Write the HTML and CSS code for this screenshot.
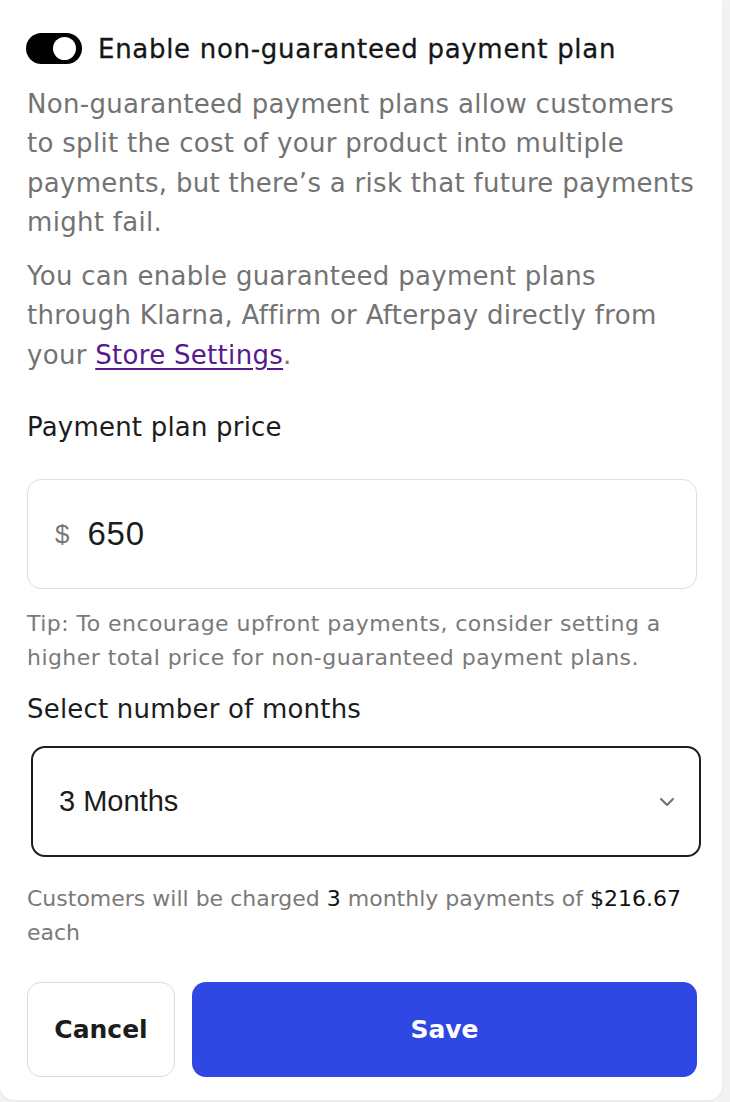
FILE: index.html
```html
<!DOCTYPE html>
<html lang="en">
<head>
<meta charset="utf-8">
<title>Payment plan</title>
<link rel="stylesheet" href="styles.css">
</head>
<body>
<div class="card">
  <div class="toggle-row">
    <span class="toggle"><span class="knob"></span></span>
    <span class="toggle-label">Enable non-guaranteed payment plan</span>
  </div>
  <p class="desc first">Non-guaranteed payment plans allow customers to split the cost of your product into multiple payments, but there’s a risk that future payments might fail.</p>
  <p class="desc second">You can enable guaranteed payment plans through Klarna, Affirm or Afterpay directly from your <a class="link" href="#">Store Settings</a>.</p>
  <div class="label price-label">Payment plan price</div>
  <div class="input-box">
    <span class="prefix">$</span>
    <span class="value">650</span>
  </div>
  <p class="hint tip">Tip: To encourage upfront payments, consider setting a higher total price for non-guaranteed payment plans.</p>
  <div class="label months-label">Select number of months</div>
  <div class="select-box">
    <span class="select-value">3 Months</span>
    <svg class="chevron" width="16" height="10" viewBox="0 0 16 10"><path d="M2 2 L8 8 L14 2" fill="none" stroke="#6f6f6f" stroke-width="2" stroke-linecap="round" stroke-linejoin="round"/></svg>
  </div>
  <p class="hint summary">Customers will be charged <span class="strong">3</span> monthly payments of <span class="strong">$216.67</span> each</p>
  <div class="actions">
    <button class="btn cancel">Cancel</button>
    <button class="btn save">Save</button>
  </div>
</div>
</body>
</html>
```

FILE: styles.css
```css
html, body {
  margin: 0;
  padding: 0;
  background: #f3f3f3;
}
body {
  font-family: "DejaVu Sans", "Open Sans", sans-serif;
  height: 1102px;
  overflow: hidden;
}
.card {
  width: 722px;
  box-sizing: border-box;
  background: #ffffff;
  padding: 33px 25px 23px 27px;
  border-radius: 0 0 14px 14px;
  display: flex;
  flex-direction: column;
  box-shadow: 0 1px 3px rgba(0,0,0,0.06);
}
.toggle-row {
  display: flex;
  align-items: center;
  height: 31px;
  margin-left: -1px;
}
.toggle {
  width: 56px;
  height: 31px;
  border-radius: 16px;
  background: #000;
  display: flex;
  align-items: center;
  justify-content: flex-end;
  padding-right: 6px;
  box-sizing: border-box;
  flex-shrink: 0;
}
.knob {
  width: 23px;
  height: 23px;
  border-radius: 50%;
  background: #fff;
}
.toggle-label {
  margin-left: 16px;
  font-size: 26px;
  color: #161616;
  letter-spacing: 0.7px;
  white-space: nowrap;
  -webkit-text-stroke: 0.3px #161616;
}
.desc {
  margin: 0;
  font-size: 26px;
  line-height: 39.3px;
  color: #737373;
  letter-spacing: 0.3px;
}
.desc.first { margin-top: 21px; }
.desc.second { margin-top: 15px; }
.link {
  color: #551a8b;
  text-decoration: underline;
  text-underline-offset: 4px;
}
.label {
  font-size: 26px;
  line-height: 36px;
  color: #1c1c1c;
  letter-spacing: 0.2px;
}
.price-label { margin-top: 34px; }
.input-box {
  margin-top: 34px;
  height: 110px;
  box-sizing: border-box;
  border: 1.5px solid #dedede;
  border-radius: 14px;
  display: flex;
  align-items: center;
  padding-left: 27px;
  font-family: "Liberation Sans", Arial, sans-serif;
}
.prefix {
  font-size: 26px;
  color: #777;
}
.value {
  margin-left: 18px;
  font-size: 33px;
  letter-spacing: 0.8px;
  color: #1c1c1c;
}
.hint {
  margin: 0;
  font-size: 22px;
  line-height: 34px;
  color: #7a7a7a;
}
.tip {
  margin-top: 18px;
  letter-spacing: 0.45px;
}
.months-label { margin-top: 16px; }
.select-box {
  margin-top: 19px;
  margin-left: 4px;
  width: 670px;
  height: 111px;
  box-sizing: border-box;
  border: 2px solid #1e1e1e;
  border-radius: 14px;
  display: flex;
  align-items: center;
  justify-content: space-between;
  padding: 0 24px 0 26px;
  font-family: "Liberation Sans", Arial, sans-serif;
}
.select-value {
  font-size: 29px;
  color: #1c1c1c;
}
.summary {
  margin-top: 25px;
}
.strong { color: #111; }
.actions {
  margin-top: 32px;
  display: flex;
  gap: 17px;
  height: 95px;
}
.btn {
  height: 95px;
  border-radius: 14px;
  font-family: "DejaVu Sans", "Open Sans", sans-serif;
  font-size: 25px;
  font-weight: 700;
  cursor: pointer;
}
.cancel {
  width: 148px;
  background: #fff;
  border: 1.5px solid #dcdcdc;
  color: #1c1c1c;
}
.save {
  flex: 1;
  background: #2f48e4;
  border: none;
  color: #fff;
}
```
